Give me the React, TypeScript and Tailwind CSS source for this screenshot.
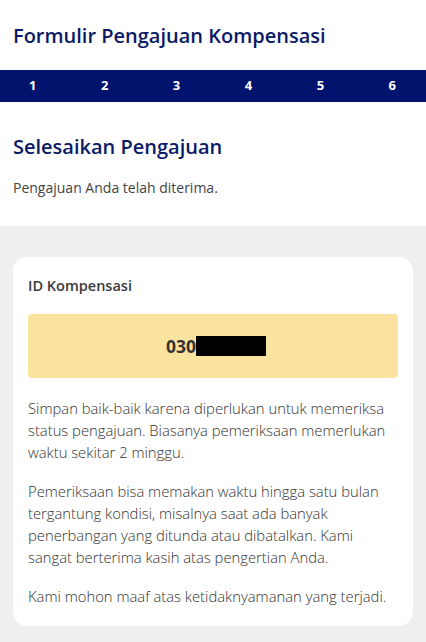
export default function App() {
  const font = { fontFamily: '"Open Sans", "Noto Sans", sans-serif' };
  return (
    <div className="w-[426px] h-[642px] overflow-hidden bg-[#efefef]" style={font}>
      <div className="bg-white">
        <h1 className="px-[13px] pt-[22px] pb-[20px] text-[20px] leading-[28px] font-semibold text-[#0b1a66]">
          Formulir Pengajuan Kompensasi
        </h1>
        <div className="flex justify-between pl-[29px] pr-[30px] h-[32px] bg-[#02136e] items-center text-white text-[13px] font-bold">
          {[1, 2, 3, 4, 5, 6].map((n) => (
            <div key={n} className="text-center">{n}</div>
          ))}
        </div>
        <h2 className="px-[13px] pt-[31px] text-[20px] leading-[28px] font-semibold text-[#0b1a66]">
          Selesaikan Pengajuan
        </h2>
        <p className="px-[13px] pt-[17px] pb-[28px] text-[14px] leading-[20px] text-[#444]">
          Pengajuan Anda telah diterima.
        </p>
      </div>
      <div className="px-[13px] pt-[31px]">
        <div className="bg-white rounded-[14px] px-[15px] pt-[18px] pb-[19px]">
          <div className="text-[14.5px] leading-[22px] font-semibold text-[#3a3a3a]">ID Kompensasi</div>
          <div className="mt-[17px] h-[64px] rounded-[4px] bg-[#fae29f] flex items-center justify-center">
            <div className="flex items-center pl-[6px]">
              <span className="text-[17.5px] font-bold text-[#333]">030</span>
              <span className="w-[70px] h-[20px] bg-black inline-block" />
            </div>
          </div>
          <div className="mt-[19px] text-[14.8px] leading-[22px] font-light text-[#333] flex flex-col gap-[17px]">
            <p>Simpan baik-baik karena diperlukan untuk memeriksa status pengajuan. Biasanya pemeriksaan memerlukan waktu sekitar 2 minggu.</p>
            <p>Pemeriksaan bisa memakan waktu hingga satu bulan tergantung kondisi, misalnya saat ada banyak penerbangan yang ditunda atau dibatalkan. Kami sangat berterima kasih atas pengertian Anda.</p>
            <p>Kami mohon maaf atas ketidaknyamanan yang terjadi.</p>
          </div>
        </div>
      </div>
    </div>
  );
}
